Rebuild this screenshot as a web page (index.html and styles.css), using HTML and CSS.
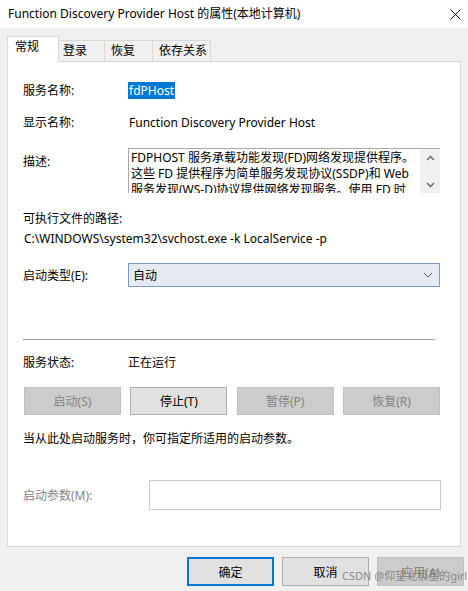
FILE: index.html
```html
<!DOCTYPE html>
<html lang="zh-CN">
<head>
<meta charset="utf-8">
<title>Function Discovery Provider Host 的属性(本地计算机)</title>
<link rel="stylesheet" href="styles.css">
</head>
<body>
<div class="window">
  <div class="titlebar">
    <span class="title">Function Discovery Provider Host 的属性(本地计算机)</span>
    <svg class="close" width="11" height="11" viewBox="0 0 11 11"><path d="M0.5 0.5 L10.5 10.5 M10.5 0.5 L0.5 10.5" stroke="#000" stroke-width="1" fill="none"/></svg>
  </div>
  <div class="tabs">
    <div class="tab active">常规</div>
    <div class="tab t2">登录</div>
    <div class="tab t3">恢复</div>
    <div class="tab t4">依存关系</div>
  </div>
  <div class="panel">
    <div class="row r-name">
      <span class="label">服务名称:</span>
      <span class="value"><span class="selected">fdPHost</span></span>
    </div>
    <div class="row r-display">
      <span class="label">显示名称:</span>
      <span class="value">Function Discovery Provider Host</span>
    </div>
    <div class="row r-desc">
      <span class="label desc-label">描述:</span>
      <div class="descbox">
        <div class="desctext">FDPHOST 服务承载功能发现(FD)网络发现提供程序。<br>这些 FD 提供程序为简单服务发现协议(SSDP)和 Web<br>服务发现(WS-D)协议提供网络发现服务。使用 FD 时</div>
        <div class="scrollbar">
          <svg width="9" height="6" viewBox="0 0 9 6"><path d="M1 5 L4.5 1.5 L8 5" stroke="#606060" stroke-width="1.3" fill="none"/></svg>
          <svg width="9" height="6" viewBox="0 0 9 6"><path d="M1 1 L4.5 4.5 L8 1" stroke="#606060" stroke-width="1.3" fill="none"/></svg>
        </div>
      </div>
    </div>
    <div class="line r-pathlabel">可执行文件的路径:</div>
    <div class="line r-path">C:\WINDOWS\system32\svchost.exe -k LocalService -p</div>
    <div class="row r-start">
      <span class="label">启动类型(E):</span>
      <div class="combo">
        <span>自动</span>
        <svg width="10" height="6" viewBox="0 0 10 6"><path d="M1 1 L5 5 L9 1" stroke="#606060" stroke-width="1" fill="none"/></svg>
      </div>
    </div>
    <div class="separator"></div>
    <div class="row r-status">
      <span class="label">服务状态:</span>
      <span class="value">正在运行</span>
    </div>
    <div class="btnrow">
      <div class="btn disabled">启动(S)</div>
      <div class="btn">停止(T)</div>
      <div class="btn disabled">暂停(P)</div>
      <div class="btn disabled">恢复(R)</div>
    </div>
    <div class="line r-hint">当从此处启动服务时，你可指定所适用的启动参数。</div>
    <div class="row r-param">
      <span class="label param-label">启动参数(M):</span>
      <div class="input"></div>
    </div>
  </div>
  <div class="footer">
    <div class="fbtn default">确定</div>
    <div class="fbtn">取消</div>
    <div class="fbtn disabled">应用(A)</div>
    <span class="watermark">CSDN @仰望北极星的girl</span>
  </div>
</div>
</body>
</html>
```
FILE: styles.css
```css
* { box-sizing: border-box; }
html, body {
  margin: 0;
  padding: 0;
  background: #f0f0f0;
}
body {
  font-family: "Noto Sans", "Noto Sans CJK SC", sans-serif;
  font-size: 12px;
  color: #000;
}
.window {
  width: 468px;
  height: 591px;
  position: relative;
  overflow: hidden;
}
.titlebar {
  height: 28px;
  background: #fff;
  display: flex;
  align-items: center;
  justify-content: space-between;
  padding: 0 7px 2px 8px;
  white-space: nowrap;
}
.title { line-height: 17px; }
.close { display: block; margin-top: 2px; }

.tabs {
  height: 33px;
  display: flex;
  align-items: flex-end;
  padding-left: 7px;
  position: relative;
  z-index: 2;
}
.tab {
  height: 21px;
  background: #f0f0f0;
  border-top: 1px solid #d9d9d9;
  border-right: 1px solid #d9d9d9;
  line-height: 19px;
  padding-left: 5px;
  white-space: nowrap;
}
.tab.active {
  height: 26px;
  width: 52px;
  background: #fff;
  border-left: 1px solid #d9d9d9;
  padding-left: 7px;
  line-height: 20px;
  margin-bottom: -1px;
}
.t2 { width: 46px; padding-left: 4px; }
.t3 { width: 48px; padding-left: 6px; }
.t4 { width: 58px; padding-left: 6px; }

.panel {
  margin: 0 7px;
  height: 486px;
  border: 1px solid #d9d9d9;
  background: #fff;
  padding-left: 15px;
  display: flex;
  flex-direction: column;
}
.row {
  display: flex;
  align-items: center;
  line-height: 17px;
  white-space: nowrap;
}
.label {
  width: 105px;
  flex: none;
}
.line { line-height: 17px; white-space: nowrap; }
.selected {
  background: #0078d7;
  color: #fff;
  padding: 0 1px;
  margin-left: 0;
  display: inline-block;
  line-height: 17px;
}
.r-name { margin-top: 20px; height: 17px; }
.r-display { margin-top: 15px; height: 17px; }
.r-display .value { padding-left: 1px; }
.r-desc { margin-top: 17px; align-items: flex-start; }
.desc-label { padding-top: 5px; }
.descbox {
  width: 312px;
  height: 45px;
  border-top: 1px solid #a8a8a8;
  border-left: 1px solid #a8a8a8;
  display: flex;
  overflow: hidden;
}
.desctext {
  flex: 1;
  padding: 1px 0 0 2px;
  line-height: 16px;
  overflow: hidden;
  white-space: nowrap;
}
.scrollbar {
  width: 20px;
  flex: none;
  background: #f0f0f0;
  display: flex;
  flex-direction: column;
  justify-content: space-between;
  align-items: center;
  padding: 6px 0 5px;
}
.scrollbar svg { display: block; }
.r-pathlabel { margin-top: 17px; }
.r-path { margin-top: 3px; padding-left: 1px; }
.r-start { margin-top: 16px; }
.combo {
  width: 312px;
  height: 24px;
  border: 1px solid #7a9cc2;
  background: #e5eaf1;
  display: flex;
  align-items: center;
  justify-content: space-between;
  padding: 0 6px 0 4px;
}
.combo svg { display: block; }
.separator {
  margin-top: 52px;
  height: 1px;
  width: 412px;
  background: #a0a0a0;
}
.r-status { margin-top: 14px; }
.btnrow {
  margin-top: 16px;
  margin-left: 1px;
  width: 416px;
  display: flex;
  justify-content: space-between;
}
.btn {
  width: 97px;
  height: 28px;
  border: 1px solid #adadad;
  background: #e1e1e1;
  display: flex;
  align-items: center;
  justify-content: center;
}
.btn.disabled {
  background: #cccccc;
  border-color: #bfbfbf;
  color: #838383;
}
.r-hint { margin-top: 15px; }
.r-param { margin-top: 33px; }
.param-label { width: 126px; color: #838383; }
.input {
  width: 292px;
  height: 30px;
  border: 1px solid #cccccc;
  background: #fff;
}

.footer {
  margin-top: 10px;
  display: flex;
  justify-content: flex-end;
  gap: 8px;
  padding-right: 4px;
}
.fbtn {
  width: 87px;
  height: 29px;
  border: 1px solid #adadad;
  background: #e1e1e1;
  display: flex;
  align-items: center;
  justify-content: center;
}
.fbtn.default { border: 2px solid #0078d7; }
.fbtn.disabled {
  background: #cccccc;
  border-color: #bfbfbf;
  color: #838383;
}
.watermark {
  position: absolute;
  left: 342px;
  top: 568px;
  font-size: 11px;
  line-height: 15px;
  color: rgba(120, 120, 120, 0.85);
  white-space: nowrap;
}
```
